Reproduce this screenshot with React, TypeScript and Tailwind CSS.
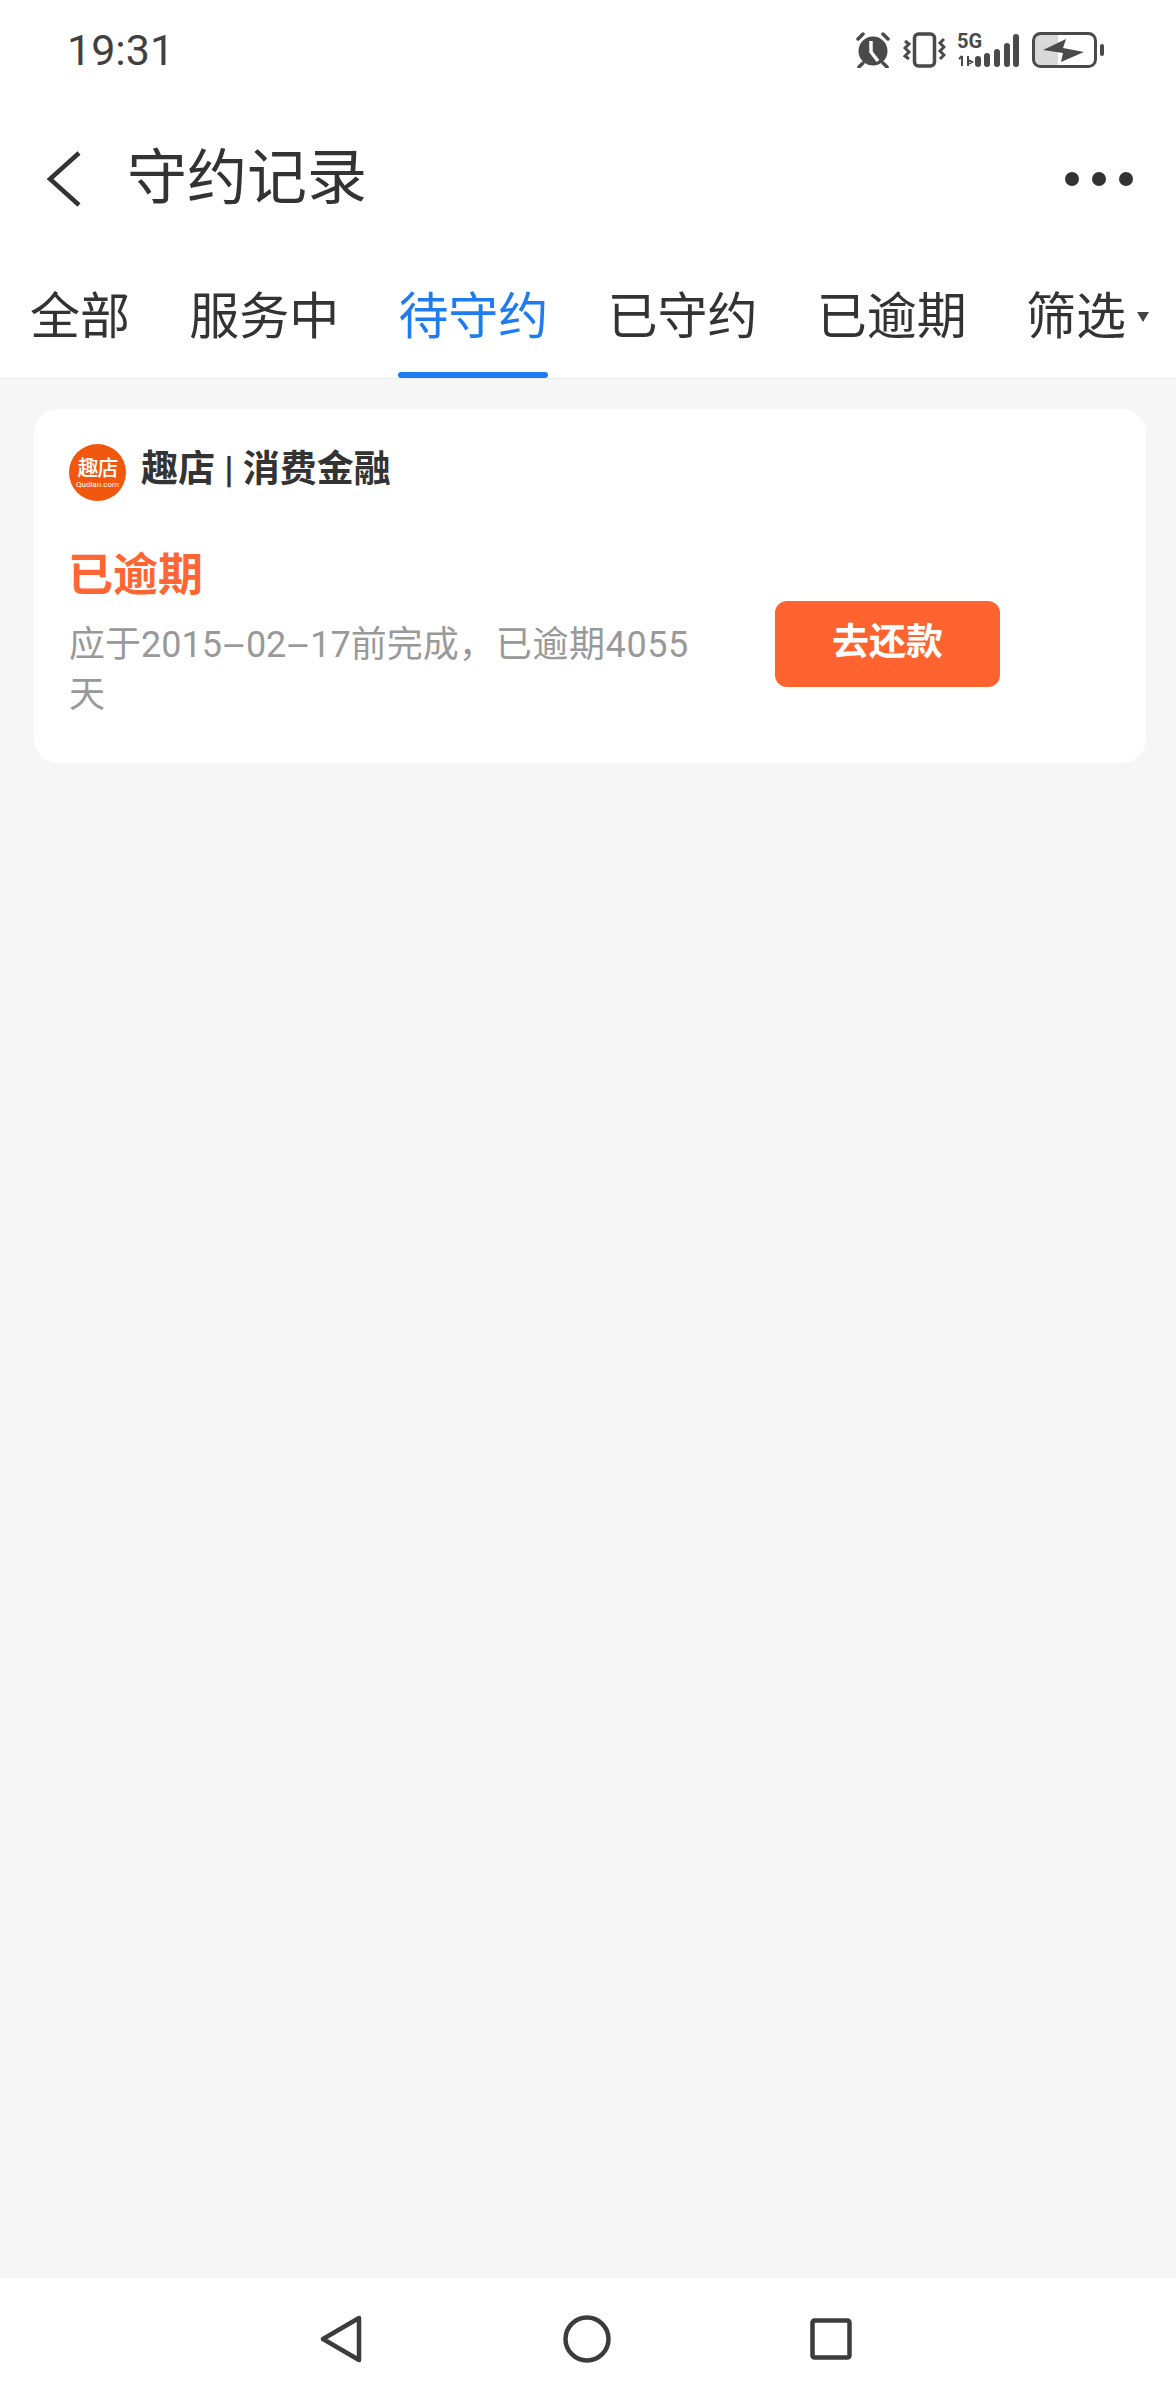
const FONT = "font-['Roboto','Noto_Sans_CJK_SC',sans-serif]";

function StatusIcons() {
  return (
    <div className="flex items-center">
      <svg width="36" height="36" viewBox="0 0 36 36" className="mr-[12px]">
        <circle cx="18" cy="19" r="14.5" fill="#4a4a4a" />
        <path d="M16 9v11l7 9" fill="none" stroke="#fff" strokeWidth="3.5" />
        <path d="M3 7l5-5M33 7l-5-5M8 31l-4 4M28 31l4 4" stroke="#4a4a4a" strokeWidth="3.5" strokeLinecap="round" />
      </svg>
      <svg width="43" height="36" viewBox="0 0 43 36" className="mr-[11px]">
        <rect x="11.5" y="2" width="20" height="32" rx="4" fill="none" stroke="#4a4a4a" strokeWidth="3.5" />
        <path d="M2 9l4 3-4 4 4 4-4 4 4 3M41 7l-4 4 4 4-4 4 4 4-4 4" fill="none" stroke="#4a4a4a" strokeWidth="3" />
      </svg>
      <div className="relative mr-[13px] h-[36px] w-[62px]">
        <span className="absolute left-0 top-[-3px] font-['Roboto',sans-serif] text-[20px] leading-[24px] font-bold text-[#4a4a4a]">5G</span>
        <svg width="62" height="36" viewBox="0 0 62 36">
          <path d="M5 24v10M2 27l3-3M11 24v10M11 28l4 2-4 2" fill="none" stroke="#4a4a4a" strokeWidth="2" />
          <rect x="18" y="24" width="6" height="11" rx="3" fill="#4a4a4a" />
          <rect x="27" y="21" width="6" height="14" rx="3" fill="#4a4a4a" />
          <rect x="37" y="17" width="6" height="18" rx="3" fill="#4a4a4a" />
          <rect x="47" y="11" width="6" height="24" rx="3" fill="#4a4a4a" />
          <rect x="56" y="2" width="6" height="33" rx="3" fill="#4a4a4a" />
        </svg>
      </div>
      <svg width="73" height="36" viewBox="0 0 73 36">
        <path d="M7 3h19v30H7a5 5 0 0 1-5-5V8a5 5 0 0 1 5-5z" fill="#d9d9d9" />
        <rect x="1.5" y="1.5" width="62" height="33" rx="7" fill="none" stroke="#4a4a4a" strokeWidth="3" />
        <path d="M11 18L34 7l-3 9 21 4-23 10 2-9z" fill="#4a4a4a" />
        <rect x="68" y="12" width="4" height="12" rx="2" fill="#4a4a4a" />
      </svg>
    </div>
  );
}

function Tab({ label, active }: { label: string; active?: boolean }) {
  return (
    <div className={`relative flex h-full items-center text-[50px] leading-none ${active ? "text-[#1f7cf0]" : "text-[#333333]"}`}>
      {label}
      {active && <div className="absolute right-0 bottom-0 left-0 h-[6px] rounded-full bg-[#1f7cf0]" />}
    </div>
  );
}

export default function App() {
  return (
    <div className={`flex h-[2400px] w-[1176px] flex-col overflow-hidden bg-[#f6f6f6] ${FONT}`}>
      <div className="flex h-[100px] items-center justify-between bg-white pl-[67px] pr-[71px]">
        <span className="text-[43px] leading-none text-[#404040]">19:31</span>
        <StatusIcons />
      </div>

      <div className="flex h-[156px] items-center bg-white pl-[46px] pr-[43px] pt-[2px]">
        <svg width="36" height="56" viewBox="0 0 36 56" className="mr-[45px]">
          <path d="M33 2L4 28l29 26" fill="none" stroke="#333333" strokeWidth="4.5" />
        </svg>
        <span className="flex-1 text-[60px] leading-none text-[#333333]">守约记录</span>
        <div className="flex items-center gap-[13px]">
          <div className="h-[14px] w-[14px] rounded-full bg-[#333333]" />
          <div className="h-[14px] w-[14px] rounded-full bg-[#333333]" />
          <div className="h-[14px] w-[14px] rounded-full bg-[#333333]" />
        </div>
      </div>

      <div className="flex h-[123px] items-center border-b border-[#ececec] bg-white pl-[30px] pr-[27px]">
        <div className="flex h-full flex-1 items-center justify-between">
          <Tab label="全部" />
          <Tab label="服务中" />
          <Tab label="待守约" active />
          <Tab label="已守约" />
          <Tab label="已逾期" />
          <div className="flex items-center text-[50px] leading-none text-[#333333]">
            筛选
            <svg width="12" height="10" viewBox="0 0 12 10" className="ml-[11px]">
              <path d="M0 0h12L6 10z" fill="#444444" />
            </svg>
          </div>
        </div>
      </div>

      <div className="flex-1 px-[34px] pt-[30px]">
        <div className="h-[354px] w-[1112px] rounded-[24px] bg-white pl-[35px] pt-[35px]">
          <div className="flex h-[57px] items-center">
            <div className="mr-[15px] flex h-[57px] w-[57px] flex-col items-center justify-center rounded-full bg-[#f2570f] text-white">
              <span className="text-[21px] leading-[23px] font-medium tracking-[-1px]">趣店</span>
              <span className="text-[8px] leading-[9px]">Qudian.com</span>
            </div>
            <span className="pb-[6px] text-[37px] leading-none font-bold text-[#333333]">趣店 | 消费金融</span>
          </div>

          <div className="mt-[45px] flex items-center">
            <div className="w-[640px]">
              <div className="-ml-[1px] text-[45px] leading-[60px] font-bold text-[#ff6633]">已逾期</div>
              <div className="mt-[14px] text-[36px] leading-[50px] text-[#999999]">
                <div>
                  <span>应于2015</span>
                  <span className="mx-[7px] inline-block scale-x-[2.2]">-</span>
                  <span>02</span>
                  <span className="mx-[7px] inline-block scale-x-[2.2]">-</span>
                  <span>17前完成</span>
                  <span className="mr-[1px]">，</span>
                  <span className="tracking-[0.6px]">已逾期4055</span>
                </div>
                <div>天</div>
              </div>
            </div>
            <div className="mt-[21px] ml-[66px] flex h-[86px] w-[225px] items-center justify-center rounded-[12px] bg-[#ff6430] pb-[2px] text-[37px] leading-none font-bold text-white">
              去还款
            </div>
          </div>
        </div>
      </div>

      <div className="flex h-[122px] items-center justify-center bg-white pr-[6px]">
        <svg width="44" height="50" viewBox="0 0 44 50" className="mr-[200px]">
          <path d="M40 4L4 25l36 21z" fill="none" stroke="#3c3c3c" strokeWidth="4.5" strokeLinejoin="round" />
        </svg>
        <svg width="48" height="48" viewBox="0 0 48 48" className="mr-[199px]">
          <circle cx="24" cy="24" r="21.5" fill="none" stroke="#3c3c3c" strokeWidth="4.5" />
        </svg>
        <svg width="42" height="42" viewBox="0 0 42 42">
          <rect x="2.5" y="2.5" width="37" height="37" rx="2" fill="none" stroke="#3c3c3c" strokeWidth="4.5" />
        </svg>
      </div>
    </div>
  );
}
